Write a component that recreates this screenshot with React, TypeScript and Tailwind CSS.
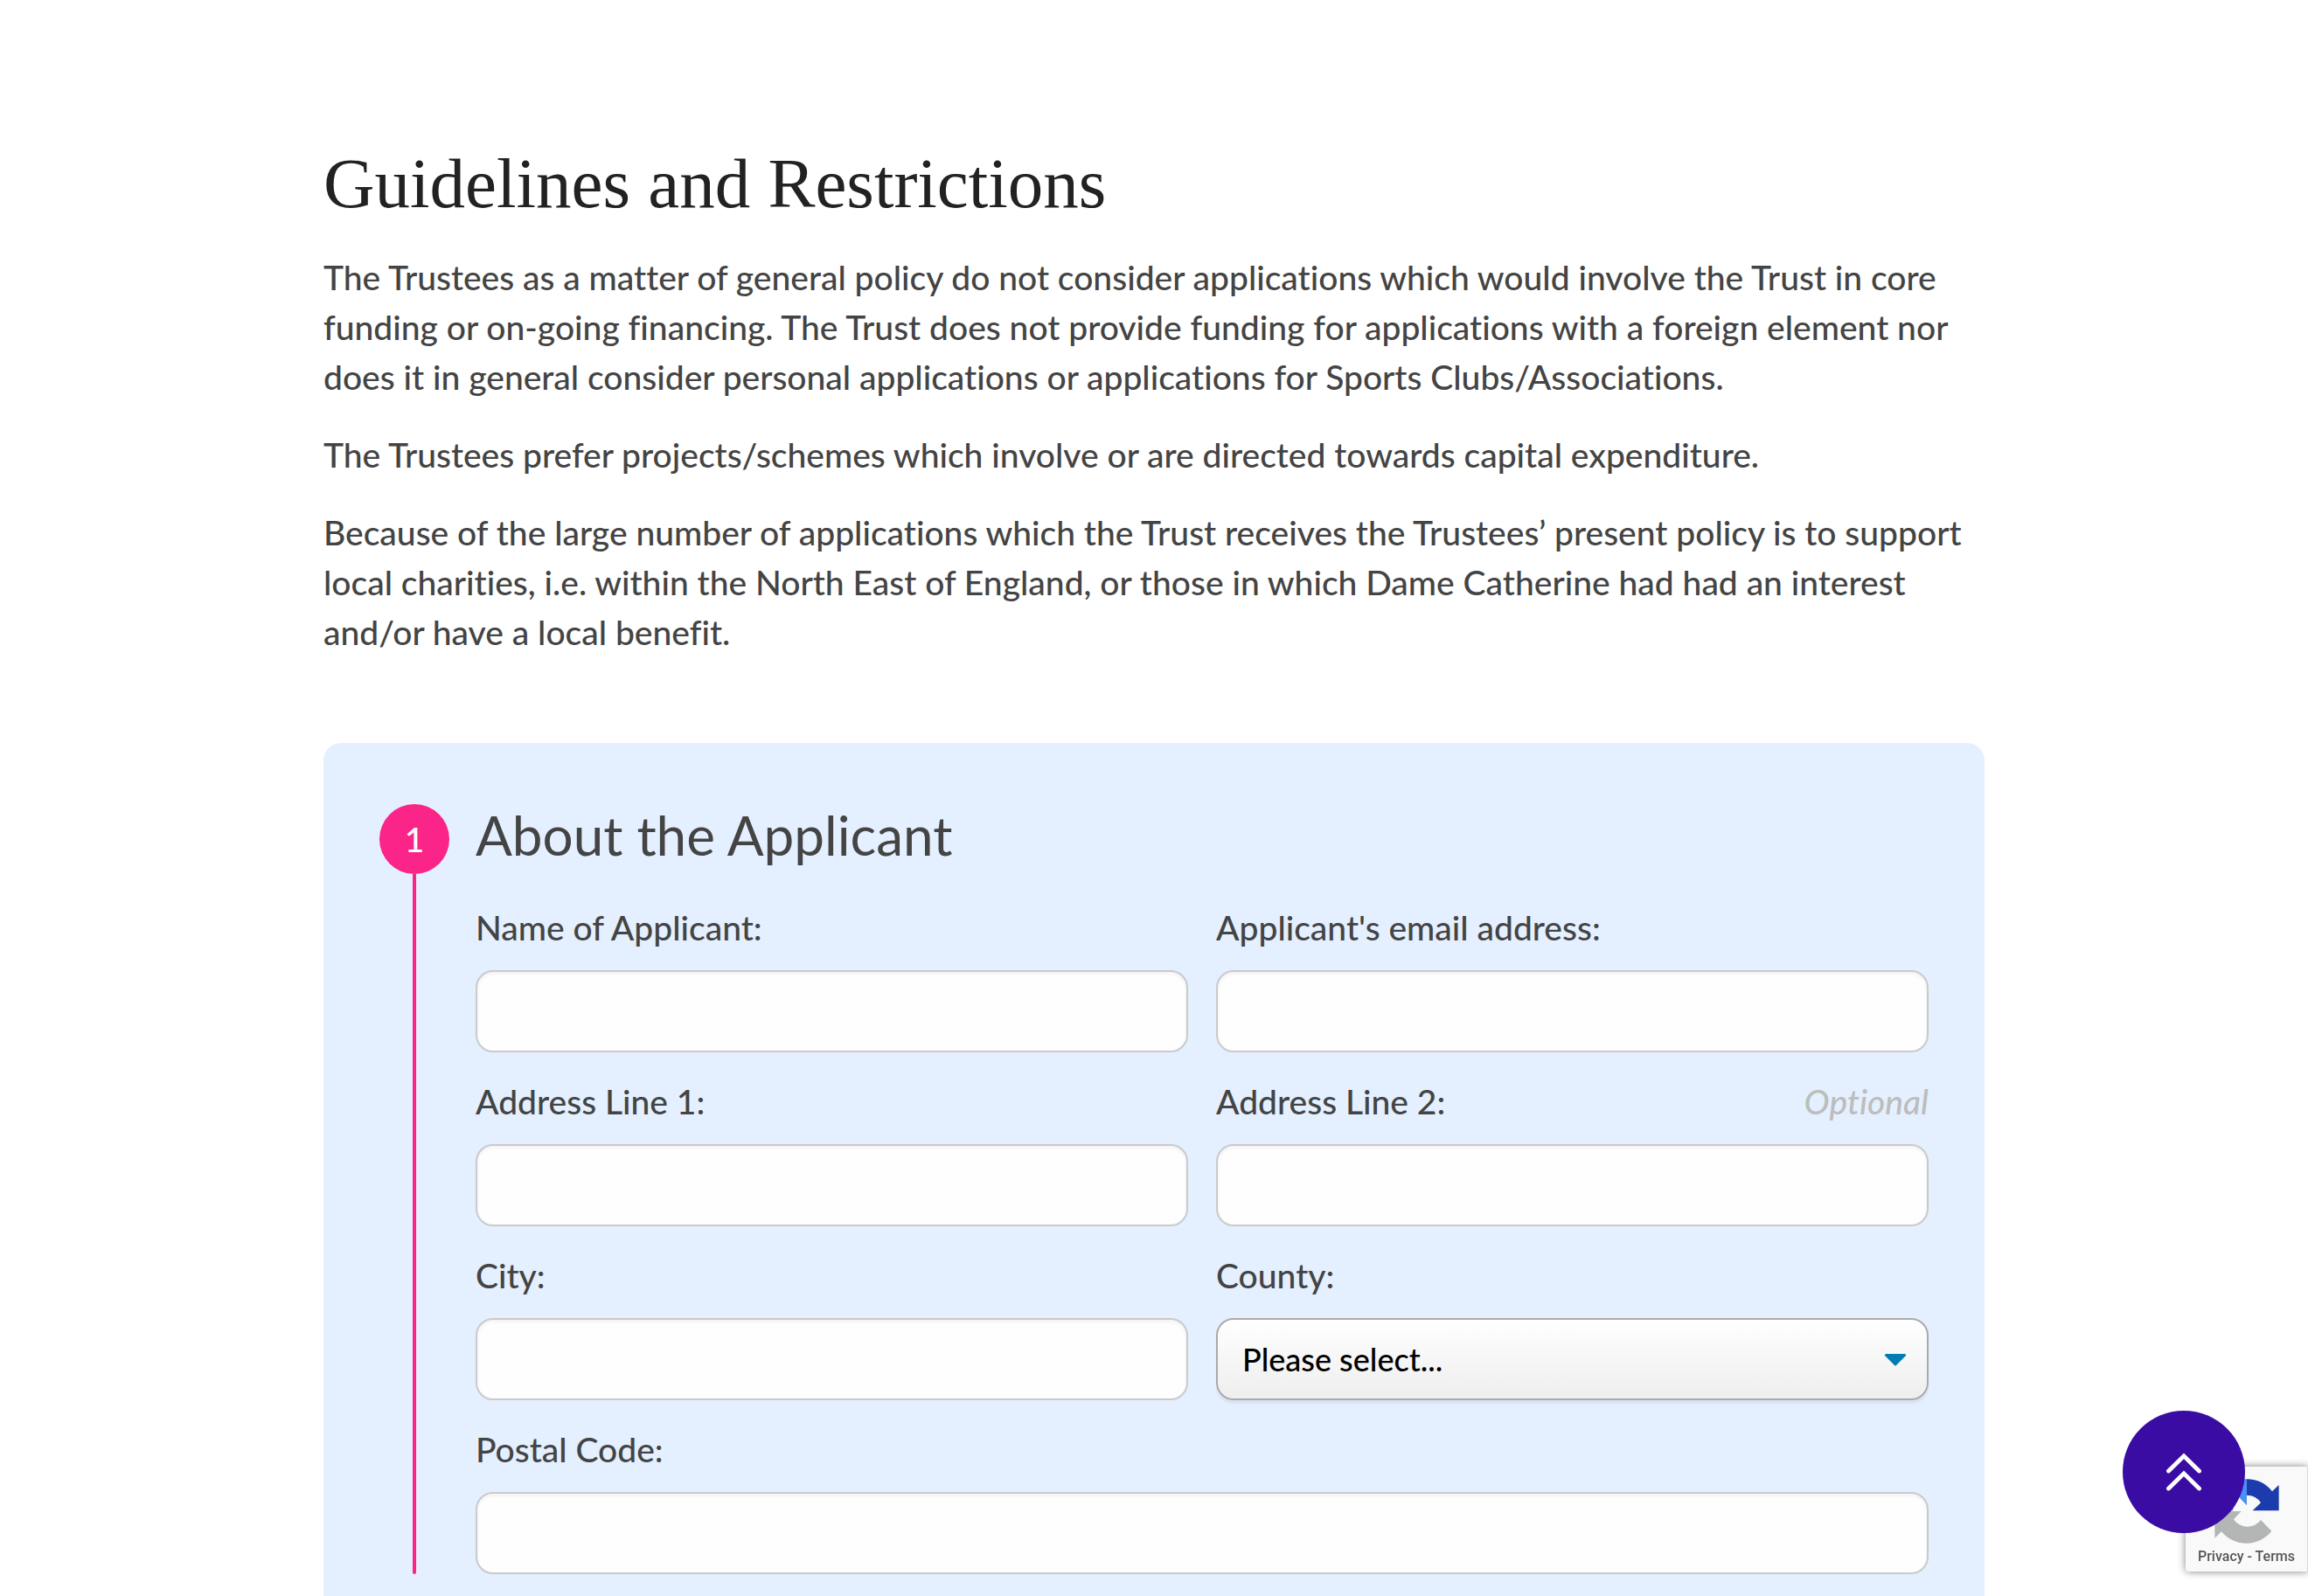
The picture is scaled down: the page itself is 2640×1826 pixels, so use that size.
import type { ReactNode } from "react";

const inputClass =
  "mt-5 block h-[94px] w-full rounded-[20px] border-2 border-[#cacaca] bg-[#fefefe] px-7 text-[36px] text-black shadow-[inset_0_2px_4px_rgba(10,10,10,0.06)] outline-none";

function Field({ id, label, optional, wide, children }: {
  id: string;
  label: string;
  optional?: boolean;
  wide?: boolean;
  children?: ReactNode;
}) {
  return (
    <div className={wide ? "col-span-2" : ""}>
      <div className="flex items-baseline justify-between">
        <label htmlFor={id}>{label}</label>
        {optional && <span className="italic text-[#bdbdbd]">Optional</span>}
      </div>
      {children ?? <input id={id} name={id} type="text" className={inputClass} />}
    </div>
  );
}

function RecaptchaLogo() {
  return (
    <svg viewBox="390 295 240 240" className="size-20" aria-hidden="true">
      <path
        fill="#4a90f5"
        d="M510 305 V395 L484 368 Q466 383 462 413 H400 Q401 366 432 337 L410 315 Q460 303 510 305Z"
      />
      <path
        fill="#1c3cae"
        d="M510 305 A110 110 0 0 1 597 347 L620 325 V413 H530 L558 386 Q542 360 510 360Z"
      />
      <path
        fill="#b4b6b6"
        d="M400 415 H491 L465 443 Q482 468 512 468 Q541 467 558 445 L595 483 A110 110 0 0 1 423 485 L400 507Z"
      />
    </svg>
  );
}

export default function App() {
  return (
    <main className="flex min-h-screen flex-col bg-white font-['Lato',sans-serif] text-[39px] leading-[57px] font-medium text-[#444444] [font-variant-ligatures:none]">
      <div className="mx-auto flex w-full max-w-[1900px] grow flex-col pt-[162px]">
        <h1 className="mb-[31px] font-['Liberation_Serif',serif] text-[81px] leading-[96px] font-normal text-[#222222]">
          Guidelines and Restrictions
        </h1>
        <div className="flex flex-col gap-8">
          <p>
            The Trustees as a matter of general policy do not consider applications which would involve the Trust in core
            <br />
            funding or on-going financing. The Trust does not provide funding for applications with a foreign element nor
            <br />
            does it in general consider personal applications or applications for Sports Clubs/Associations.
          </p>
          <p>The Trustees prefer projects/schemes which involve or are directed towards capital expenditure.</p>
          <p>
            Because of the large number of applications which the Trust receives the Trustees’ present policy is to support
            <br />
            local charities, i.e. within the North East of England, or those in which Dame Catherine had had an interest
            <br />
            and/or have a local benefit.
          </p>
        </div>

        <form className="mt-[98px] flex grow items-start gap-[30px] rounded-t-[20px] bg-[#e4f0ff] px-16 pt-[70px] pb-[26px]">
          <div className="flex w-20 shrink-0 flex-col items-center self-stretch">
            <span className="flex size-20 items-center justify-center rounded-full bg-[#fb2488] text-white">1</span>
            <span className="w-1 grow rounded-b-sm bg-[#fb2488]" />
          </div>
          <div className="grow">
            <h2 className="mb-[43px] text-[62px] leading-[70px] font-normal">About the Applicant</h2>
            <div className="grid grid-cols-2 gap-x-8 gap-y-7">
              <Field id="name" label="Name of Applicant:" />
              <Field id="email" label="Applicant's email address:" />
              <Field id="address1" label="Address Line 1:" />
              <Field id="address2" label="Address Line 2:" optional />
              <Field id="city" label="City:" />
              <Field id="county" label="County:">
                <div className="relative mt-5">
                  <select
                    id="county"
                    name="county"
                    className="block h-[94px] w-full appearance-none rounded-[20px] border-2 border-[#aaaaaa] bg-linear-to-b from-white to-[#eeeeee] px-7 text-[36px] text-black shadow-[0_4px_2px_rgba(0,0,0,0.05)] outline-none"
                  >
                    <option>Please select...</option>
                  </select>
                  <svg
                    viewBox="0 0 24 14"
                    className="pointer-events-none absolute top-[41px] right-[26px] h-[14px] w-6"
                    aria-hidden="true"
                  >
                    <path fill="#007cb2" d="M1 0H23Q25 1 23.5 2.5L13 13Q12 14 11 13L0.5 2.5Q-1 1 1 0Z" />
                  </svg>
                </div>
              </Field>
              <Field id="postcode" label="Postal Code:" wide />
            </div>
          </div>
        </form>
      </div>

      <aside className="fixed right-0 bottom-7 flex h-[120px] w-[140px] flex-col items-center rounded-l-[4px] border-r border-[#c5dafb] bg-[#f9f9f9] pt-[11px] shadow-[0_0_10px_#808080]">
        <RecaptchaLogo />
        <p className="font-['Roboto',sans-serif] text-[16px] leading-6 whitespace-nowrap text-[#555555]">
          <a href="#privacy">Privacy</a> - <a href="#terms">Terms</a>
        </p>
      </aside>
      <button
        type="button"
        aria-label="Back to top"
        className="fixed right-[72px] bottom-[72px] flex size-[140px] items-center justify-center rounded-full bg-[#3a0ca3] text-white"
      >
        <svg
          viewBox="0 0 40 44"
          className="h-11 w-10"
          fill="none"
          stroke="currentColor"
          strokeWidth="4.8"
          strokeLinecap="round"
          strokeLinejoin="miter"
          aria-hidden="true"
        >
          <path d="M2.5 21 L20 3.8 L37.5 21 M2.5 41 L20 23.8 L37.5 41" />
        </svg>
      </button>
    </main>
  );
}
